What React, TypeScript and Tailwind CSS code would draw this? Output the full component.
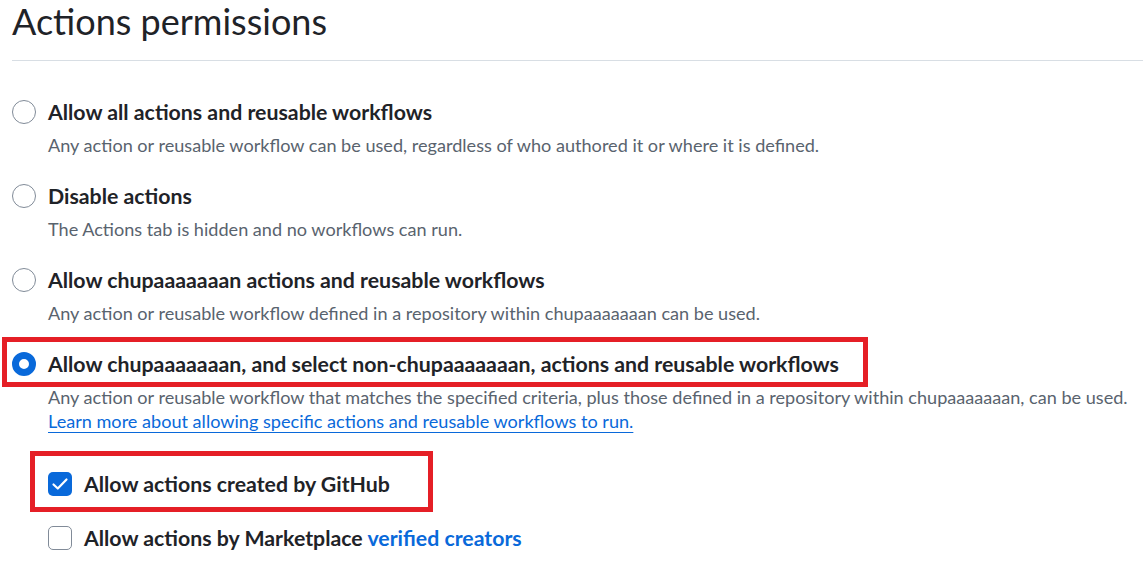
import React from "react";

function Radio({ checked }: { checked?: boolean }) {
  return checked ? (
    <span className="box-border block h-[24px] w-[24px] shrink-0 rounded-full border-[7px] border-[#0969da] bg-white" />
  ) : (
    <span className="box-border block h-[24px] w-[24px] shrink-0 rounded-full border-[1.5px] border-[#818b98] bg-white" />
  );
}

function Checkbox({ checked }: { checked?: boolean }) {
  return checked ? (
    <span className="flex h-[24px] w-[24px] shrink-0 items-center justify-center rounded-[5px] bg-[#0969da]">
      <svg width="20" height="20" viewBox="0 0 20 20" fill="none">
        <path d="M3.5 10.5 L7.8 14.5 L16.5 5.5" stroke="white" strokeWidth="2.2" strokeLinecap="round" strokeLinejoin="round" />
      </svg>
    </span>
  ) : (
    <span className="box-border block h-[24px] w-[24px] shrink-0 rounded-[5px] border-[1.5px] border-[#818b98] bg-white" />
  );
}

function Option({
  label,
  desc,
  checked,
  boxed,
  link,
}: {
  label: string;
  desc: string;
  checked?: boolean;
  boxed?: boolean;
  link?: string;
}) {
  return (
    <div className="mt-[24px] first:mt-[36px]">
      <div className="relative flex items-center gap-[12px]">
        <Radio checked={checked} />
        <span className="whitespace-nowrap text-[21.3px] leading-[30px] font-bold text-[#1f2328]">{label}</span>
        {boxed && (
          <span className="pointer-events-none absolute left-[-10px] top-[-12px] box-border h-[50px] w-[866px] border-[5px] border-[#e51f26]" />
        )}
      </div>
      <div className="mt-[6px] pl-[36px] text-[18.1px] leading-[24px] whitespace-nowrap text-[#59636e]">
        <div>{desc}</div>
        {link && (
          <div>
            <a className="text-[#0969da] underline decoration-1 underline-offset-[4px]" href="#">
              {link}
            </a>
          </div>
        )}
      </div>
    </div>
  );
}

export default function App() {
  return (
    <div className="min-h-[567px] bg-white pl-[12px] font-['Lato',sans-serif]">
      <div className="border-b border-[#d8dee4] pb-[17px]">
        <h2 className="h-[43px] text-[36px] leading-[43px] font-normal text-[#1f2328]">Actions permissions</h2>
      </div>
      <div>
        <Option
          label="Allow all actions and reusable workflows"
          desc="Any action or reusable workflow can be used, regardless of who authored it or where it is defined."
        />
        <Option label="Disable actions" desc="The Actions tab is hidden and no workflows can run." />
        <Option
          label="Allow chupaaaaaaan actions and reusable workflows"
          desc="Any action or reusable workflow defined in a repository within chupaaaaaaan can be used."
        />
        <Option
          checked
          boxed
          label="Allow chupaaaaaaan, and select non-chupaaaaaaan, actions and reusable workflows"
          desc="Any action or reusable workflow that matches the specified criteria, plus those defined in a repository within chupaaaaaaan, can be used."
          link="Learn more about allowing specific actions and reusable workflows to run."
        />
      </div>
      <div className="mt-[36px] pl-[36px]">
        <div className="relative flex items-center gap-[12px]">
          <Checkbox checked />
          <span className="whitespace-nowrap text-[21.3px] leading-[30px] font-bold text-[#1f2328]">
            Allow actions created by GitHub
          </span>
          <span className="pointer-events-none absolute left-[-18px] top-[-18px] box-border h-[61px] w-[403px] border-[5px] border-[#e51f26]" />
        </div>
        <div className="mt-[24px] flex items-center gap-[12px]">
          <Checkbox />
          <span className="whitespace-nowrap text-[21.3px] leading-[30px] font-bold text-[#1f2328]">
            Allow actions by Marketplace <span className="text-[#0969da]">verified creators</span>
          </span>
        </div>
      </div>
    </div>
  );
}
